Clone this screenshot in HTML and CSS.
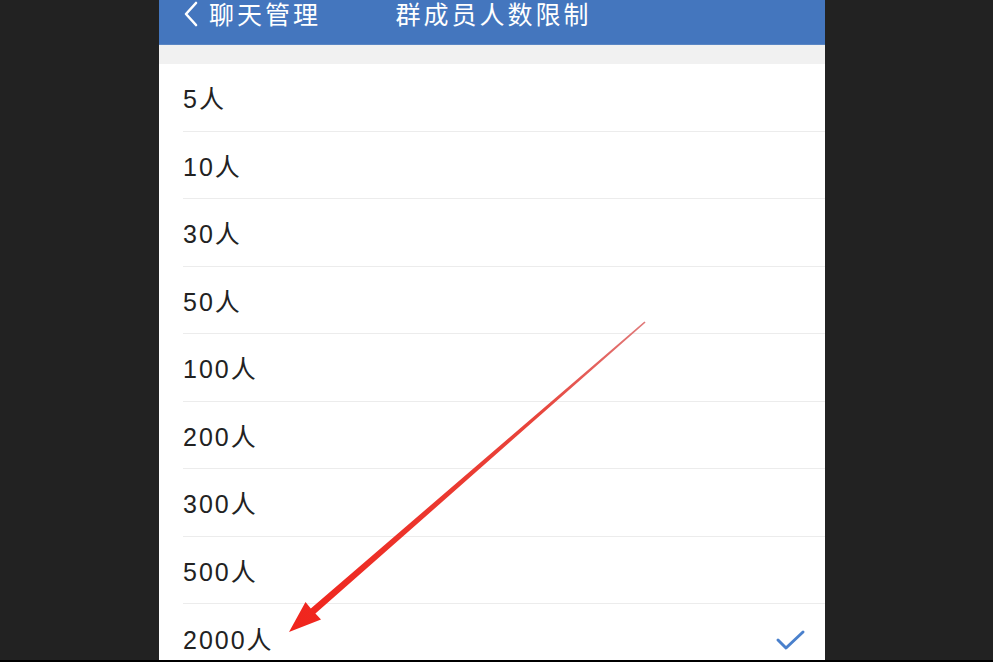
FILE: index.html
```html
<!DOCTYPE html>
<html lang="zh-CN">
<head>
<meta charset="utf-8">
<link rel="stylesheet" href="styles.css">
</head>
<body>
<div class="stage">
  <div class="phone">
    <header class="nav">
      <div class="back">
        <svg class="chev" width="16" height="26" viewBox="0 0 16 26"><path d="M13 2 L3 13 L13 24" fill="none" stroke="#fff" stroke-width="2.6" stroke-linecap="round" stroke-linejoin="round"/></svg>
        <span class="back-text">聊天管理</span>
      </div>
      <div class="title">群成员人数限制</div>
    </header>
    <div class="gap"></div>
    <ul class="list">
      <li class="row"><span>5人</span></li>
      <li class="row"><span>10人</span></li>
      <li class="row"><span>30人</span></li>
      <li class="row"><span>50人</span></li>
      <li class="row"><span>100人</span></li>
      <li class="row"><span>200人</span></li>
      <li class="row"><span>300人</span></li>
      <li class="row"><span>500人</span></li>
      <li class="row last"><span>2000人</span>
        <svg class="check" width="32" height="24" viewBox="0 0 32 24"><path d="M3 12 L11 20 L28 4" fill="none" stroke="#4a80cc" stroke-width="3" stroke-linecap="round" stroke-linejoin="round"/></svg>
      </li>
    </ul>
  </div>
  <div class="bottom-bar"></div>
  <svg class="arrow" width="993" height="662" viewBox="0 0 993 662">
    <defs>
      <linearGradient id="ag" x1="645" y1="322" x2="289" y2="632" gradientUnits="userSpaceOnUse">
        <stop offset="0" stop-color="#e07a7a"/>
        <stop offset="0.3" stop-color="#e8453c"/>
        <stop offset="1" stop-color="#f0241c"/>
      </linearGradient>
    </defs>
    <polygon fill="url(#ag)" points="289,632 321,619.5 315.4,613.6 645.6,322.6 644.4,321.4 310.8,608.4 305.5,602"/>
  </svg>
</div>
</body>
</html>
```

FILE: styles.css
```css
html, body {
  margin: 0;
  padding: 0;
  background: #222222;
}
body {
  font-family: "Noto Sans CJK SC", "Noto Sans", sans-serif;
  width: 993px;
  height: 662px;
  overflow: hidden;
}
.stage {
  position: relative;
  width: 993px;
  height: 662px;
}
.phone {
  margin-left: 159px;
  width: 666px;
  height: 660px;
  background: #ffffff;
  overflow: hidden;
  display: flex;
  flex-direction: column;
}
.nav {
  height: 45px;
  flex: none;
  background: #4476be;
  border-bottom: 1px solid #5a86c4;
  box-sizing: border-box;
  position: relative;
  display: flex;
  align-items: flex-start;
  color: #fff;
}
.back {
  display: flex;
  align-items: center;
  padding-left: 24px;
  height: 27px;
}
.chev {
  margin-right: 10px;
}
.back-text {
  font-size: 25px;
  letter-spacing: 3px;
  line-height: 27px;
}
.title {
  position: absolute;
  left: 0;
  right: 0;
  top: 0;
  text-align: center;
  font-size: 25px;
  letter-spacing: 3px;
  line-height: 27px;
  padding-left: 3px;
}
.gap {
  height: 19px;
  flex: none;
  background: #f1f1f1;
}
.list {
  list-style: none;
  margin: 0;
  padding: 0 0 0 24px;
}
.row {
  height: 67.5px;
  box-sizing: border-box;
  border-bottom: 1px solid #ececec;
  display: flex;
  align-items: center;
  justify-content: space-between;
  padding-right: 18px;
  font-family: "Liberation Sans", "Noto Sans CJK SC", sans-serif;
  font-size: 25px;
  letter-spacing: 2px;
  color: #222;
}
.row.last {
  border-bottom: none;
}
.check {
  margin-top: 4px;
}
.bottom-bar {
  height: 2px;
  background: #000;
}
.arrow {
  position: absolute;
  left: 0;
  top: 0;
  pointer-events: none;
}
```
